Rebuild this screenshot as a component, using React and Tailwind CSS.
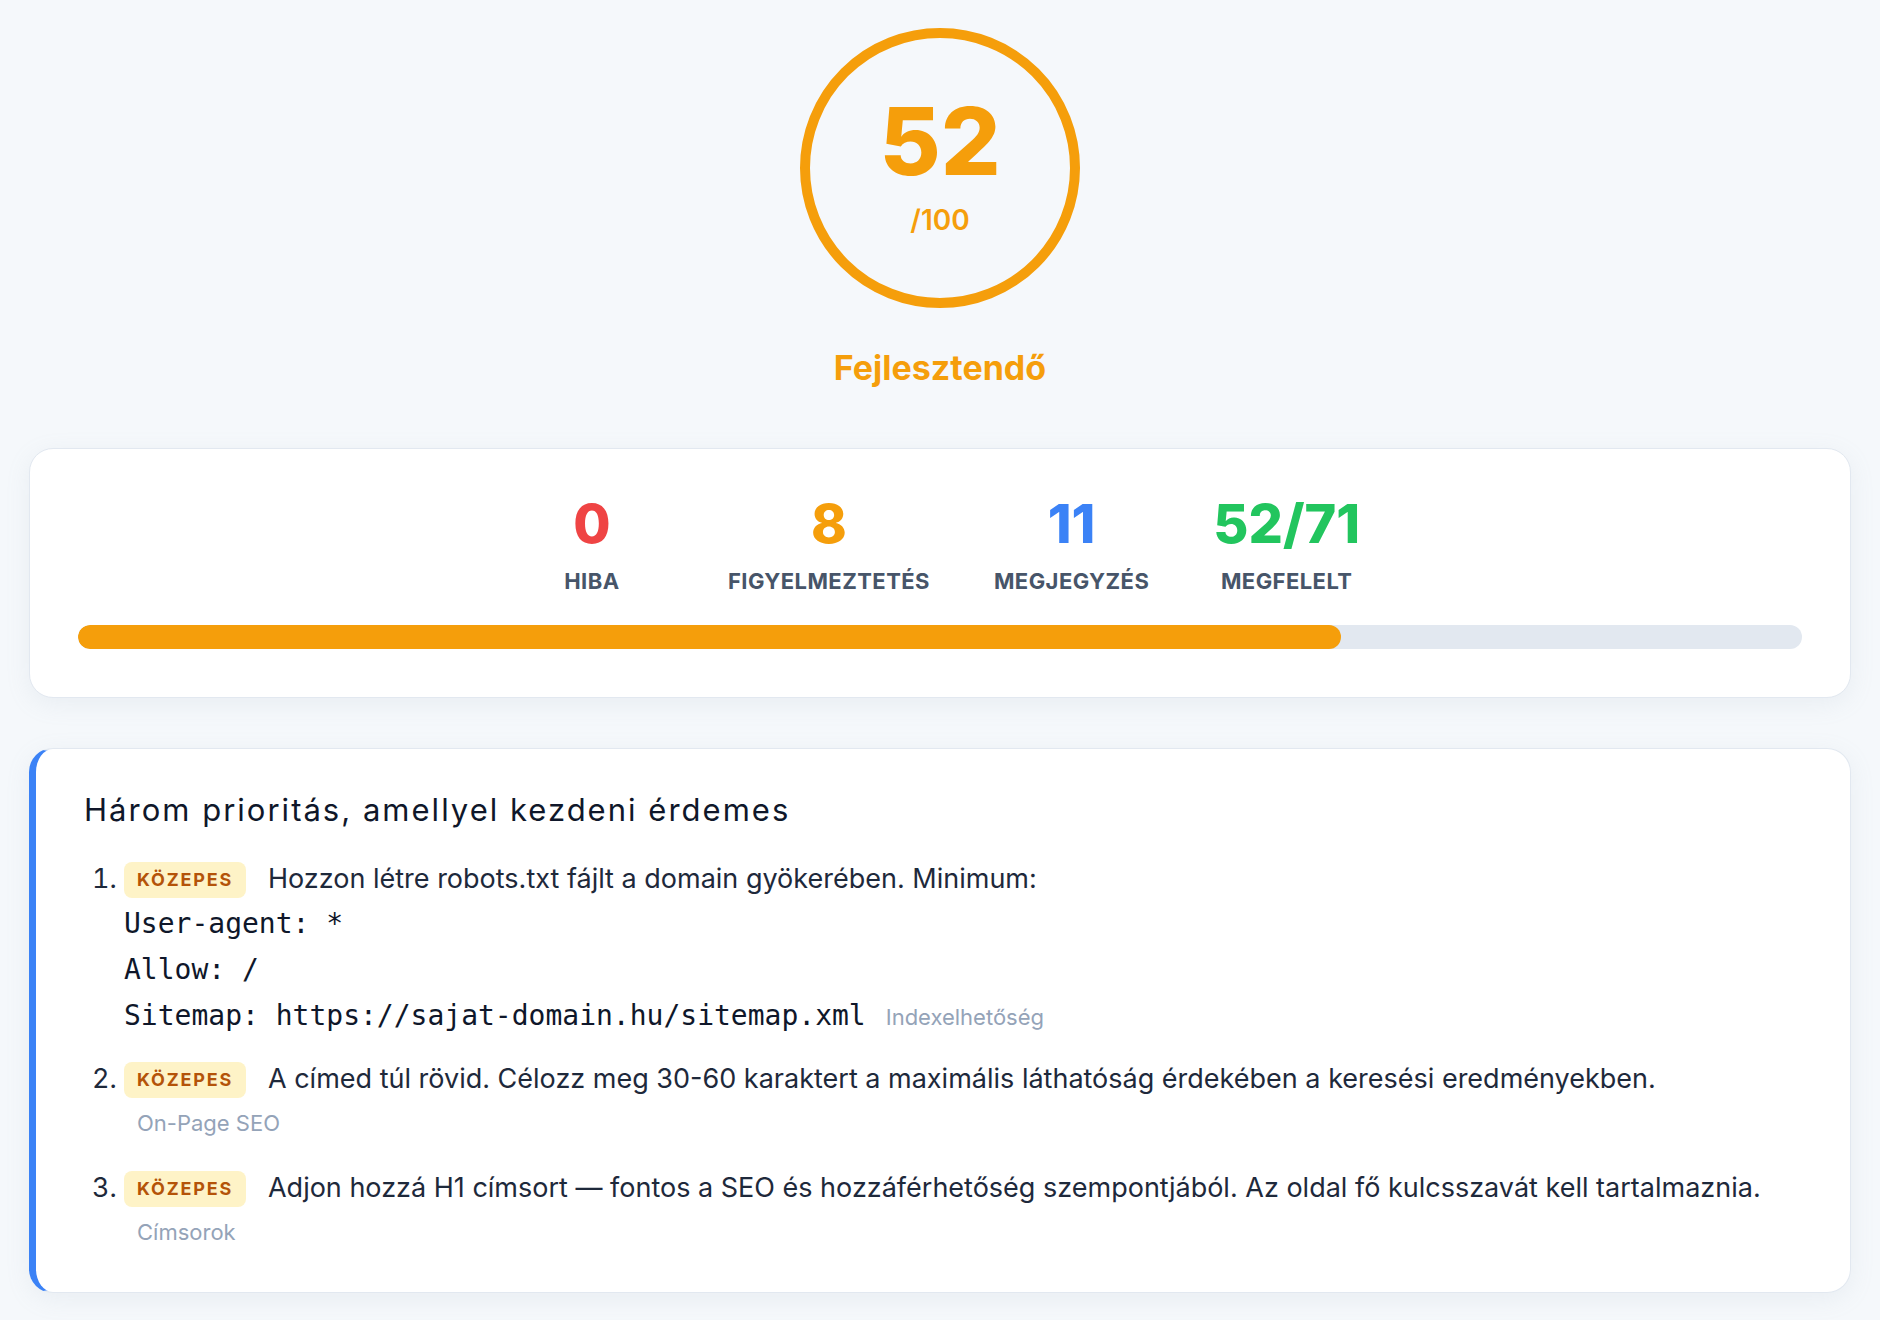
const stats = [
  { value: '0', label: 'HIBA', color: 'text-[#ef4444]' },
  { value: '8', label: 'FIGYELMEZTETÉS', color: 'text-[#f59e0b]' },
  { value: '11', label: 'MEGJEGYZÉS', color: 'text-[#3b82f6]' },
  { value: '52/71', label: 'MEGFELELT', color: 'text-[#22c55e]' },
]

const priorities = [
  {
    level: 'KÖZEPES',
    text: 'Hozzon létre robots.txt fájlt a domain gyökerében. Minimum:',
    code: ['User-agent: *', 'Allow: /', 'Sitemap: https://sajat-domain.hu/sitemap.xml'],
    tag: 'Indexelhetőség',
  },
  {
    level: 'KÖZEPES',
    text: 'A címed túl rövid. Célozz meg 30-60 karaktert a maximális láthatóság érdekében a keresési eredményekben.',
    tag: 'On-Page SEO',
  },
  {
    level: 'KÖZEPES',
    text: 'Adjon hozzá H1 címsort — fontos a SEO és hozzáférhetőség szempontjából. Az oldal fő kulcsszavát kell tartalmaznia.',
    tag: 'Címsorok',
  },
]

function ScoreRing({ score }) {
  return (
    <div className="flex flex-col items-center">
      <div className="w-[280px] h-[280px] rounded-full border-[10px] border-[#f59e0b] flex flex-col items-center justify-center pb-[8px]">
        <div className="text-[94px] leading-none font-extrabold text-[#f59e0b]">{score}</div>
        <div className="mt-[18px] text-[28px] leading-none font-semibold text-[#f59e0b]">/100</div>
      </div>
      <div className="mt-[34px] text-[34px] font-bold text-[#f59e0b]">Fejlesztendő</div>
    </div>
  )
}

function StatsCard() {
  return (
    <div className="mt-[55px] bg-white border border-[#e2e8f0] rounded-3xl px-12 pt-12 pb-12 shadow-[0_6px_24px_rgba(148,163,184,0.12)]">
      <div className="flex justify-center gap-[64px]">
        {stats.map((s) => (
          <div key={s.label} className="min-w-[144px] flex flex-col items-center">
            <div className={`text-[54px] leading-none font-extrabold ${s.color}`}>{s.value}</div>
            <div className="mt-[14px] text-[22px] font-bold tracking-[0.02em] text-[#475569]">{s.label}</div>
          </div>
        ))}
      </div>
      <div className="mt-[27px] h-[24px] rounded-full bg-[#e2e8f0] overflow-hidden">
        <div className="h-full rounded-full bg-[#f59e0b]" style={{ width: `${(52 / 71) * 100}%` }} />
      </div>
    </div>
  )
}

function Badge({ children }) {
  return (
    <span className="inline-block align-middle px-[13px] py-[7px] rounded-lg bg-[#fef3c7] text-[#b45309] text-[18px] leading-[22px] font-bold tracking-[0.1em]">
      {children}
    </span>
  )
}

function PriorityItem({ item }) {
  return (
    <li>
      <Badge>{item.level}</Badge>
      <span className="ml-[22px]">{item.text}</span>
      {item.code ? (
        <div className="-mb-[3px] font-['DejaVu_Sans_Mono',monospace] text-[28px] leading-[46px] text-[#0f172a]">
          {item.code.map((line, i) => (
            <div key={i} className="whitespace-pre">
              {line}
              {i === item.code.length - 1 && (
                <span className="ml-[20px] font-['Inter','Noto_Sans',sans-serif] text-[22px] text-[#94a3b8]">{item.tag}</span>
              )}
            </div>
          ))}
        </div>
      ) : (
        <div className="ml-[13px] text-[22px] text-[#94a3b8]">{item.tag}</div>
      )}
    </li>
  )
}

function PrioritiesCard() {
  return (
    <div className="mt-[50px] bg-white border border-[#e2e8f0] border-l-[7px] border-l-[#3b82f6] rounded-3xl pl-12 pr-12 pt-[38px] pb-[37px] shadow-[0_6px_24px_rgba(148,163,184,0.12)]">
      <h2 className="text-[31px] font-normal tracking-[0.065em] text-[#0f172a]">Három prioritás, amellyel kezdeni érdemes</h2>
      <ol className="mt-[22px] list-decimal pl-[40px] text-[27px] leading-[45px] text-[#1e293b] space-y-[19px]">
        {priorities.map((p, i) => (
          <PriorityItem key={i} item={p} />
        ))}
      </ol>
    </div>
  )
}

export default function App() {
  return (
    <div className="min-h-screen bg-[#f5f8fb] px-[29px] pt-[28px] pb-[29px] font-['Inter','Noto_Sans',sans-serif]">
      <ScoreRing score={52} />
      <StatsCard />
      <PrioritiesCard />
    </div>
  )
}
